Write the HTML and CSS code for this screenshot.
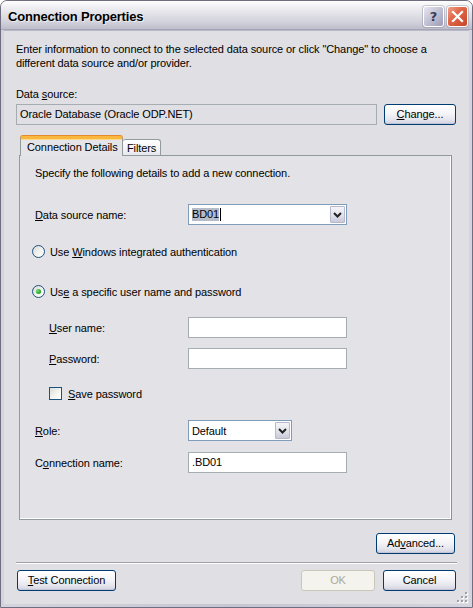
FILE: index.html
```html
<!DOCTYPE html>
<html>
<head>
<meta charset="utf-8">
<title>Connection Properties</title>
<link rel="stylesheet" href="styles.css">
</head>
<body>
<div class="window">
  <div class="titlebar">
    <span class="title">Connection Properties</span>
    <div class="caption-btn help"><span>?</span></div>
    <div class="caption-btn close">
      <svg width="13" height="13" viewBox="0 0 13 13"><path d="M2 2 L11 11 M11 2 L2 11" stroke="#fff" stroke-width="2.2" stroke-linecap="square"/></svg>
    </div>
  </div>
  <div class="client">
    <p class="intro">Enter information to connect to the selected data source or click "Change" to choose a different data source and/or provider.</p>
    <div class="label ds-label">Data <u>s</u>ource:</div>
    <div class="ds-row">
      <div class="field readonly">Oracle Database (Oracle ODP.NET)</div>
      <button class="btn change"><u>C</u>hange...</button>
    </div>
    <div class="tabs">
      <div class="tab selected">Connection Details</div>
      <div class="tab">Filters</div>
    </div>
    <div class="panel">
      <div class="hint">Specify the following details to add a new connection.</div>
      <div class="frow r-dsn">
        <span class="flabel"><u>D</u>ata source name:</span>
        <div class="combo wide"><span class="ctext"><span class="sel">BD01</span><span class="caret"></span></span><span class="cbtn"><svg width="9" height="6" viewBox="0 0 9 6"><path d="M1 1 L4.5 4.5 L8 1" fill="none" stroke="#222" stroke-width="2"/></svg></span></div>
      </div>
      <div class="rrow r-win"><span class="radio"></span><span>Use <u>W</u>indows integrated authentication</span></div>
      <div class="rrow r-spec"><span class="radio checked"></span><span>Us<u>e</u> a specific user name and password</span></div>
      <div class="frow indent r-user">
        <span class="flabel"><u>U</u>ser name:</span>
        <div class="field text"></div>
      </div>
      <div class="frow indent r-pass">
        <span class="flabel"><u>P</u>assword:</span>
        <div class="field text"></div>
      </div>
      <div class="rrow indent r-save"><span class="check"></span><span><u>S</u>ave password</span></div>
      <div class="frow r-role">
        <span class="flabel"><u>R</u>ole:</span>
        <div class="combo narrow"><span class="ctext">Default</span><span class="cbtn"><svg width="9" height="6" viewBox="0 0 9 6"><path d="M1 1 L4.5 4.5 L8 1" fill="none" stroke="#222" stroke-width="2"/></svg></span></div>
      </div>
      <div class="frow r-conn">
        <span class="flabel">C<u>o</u>nnection name:</span>
        <div class="field text">.BD01</div>
      </div>
    </div>
    <div class="adv-row"><button class="btn adv">Ad<u>v</u>anced...</button></div>
    <div class="sep"></div>
    <div class="bottom-row">
      <button class="btn test"><u>T</u>est Connection</button>
      <div class="spacer"></div>
      <button class="btn ok" disabled>OK</button>
      <button class="btn cancel">Cancel</button>
    </div>
    <svg class="grip" width="11" height="11" viewBox="0 0 11 11">
      <g fill="#fff"><rect x="9" y="1" width="2" height="2"/><rect x="5" y="5" width="2" height="2"/><rect x="9" y="5" width="2" height="2"/><rect x="1" y="9" width="2" height="2"/><rect x="5" y="9" width="2" height="2"/><rect x="9" y="9" width="2" height="2"/></g>
      <g fill="#a0a0a8"><rect x="8" y="0" width="2" height="2"/><rect x="4" y="4" width="2" height="2"/><rect x="8" y="4" width="2" height="2"/><rect x="0" y="8" width="2" height="2"/><rect x="4" y="8" width="2" height="2"/><rect x="8" y="8" width="2" height="2"/></g>
    </svg>
  </div>
</div>
</body>
</html>
```

FILE: styles.css
```css
* { box-sizing: border-box; }
html, body { margin: 0; padding: 0; }
body {
  background: #ffffff;
  font-family: "Liberation Sans", Arial, sans-serif;
  font-size: 11px;
  letter-spacing: -0.1px;
  color: #000;
}
u { text-decoration: underline; text-underline-offset: 1px; }

.window {
  width: 473px;
  height: 608px;
  display: flex;
  flex-direction: column;
  border: 1px solid #6e6e80;
  border-radius: 7px 7px 0 0;
  background: linear-gradient(90deg, #d4d4de, #c6c6d2 50%, #d4d4de);
  overflow: hidden;
}

.titlebar {
  height: 29px;
  flex: none;
  display: flex;
  align-items: center;
  gap: 3px;
  padding: 0 4px 0 7px;
  background: linear-gradient(#fefefe 0%, #f2f2f5 18%, #e2e2e8 45%, #d2d2dc 75%, #bdbdcb 100%);
  border-bottom: 1px solid #a4a4b4;
}
.title {
  flex: 1;
  font-weight: bold;
  font-size: 13px;
  letter-spacing: -0.2px;
  color: #000;
  text-shadow: 1px 1px 0 rgba(255,255,255,0.6);
  padding-top: 2px;
}
.caption-btn {
  width: 21px;
  height: 21px;
  border: 1px solid #ffffff;
  border-radius: 3px;
  display: flex;
  align-items: center;
  justify-content: center;
  box-shadow: 0 0 0 1px rgba(120,120,140,0.35);
  margin-top: 2px;
}
.help {
  background: linear-gradient(135deg, #e6e6f0 0%, #c4c4d8 45%, #9c9cb8 100%);
}
.help span {
  font-family: "DejaVu Sans", sans-serif;
  font-weight: bold;
  font-size: 13px;
  color: #3c3c52;
}
.close {
  background: linear-gradient(135deg, #f0a08c 0%, #e06848 40%, #c8452a 100%);
}

.client {
  flex: 1;
  margin: 0 3px 3px;
  background: #e0dfe3;
  padding: 11px 13px 0 12px;
  display: flex;
  flex-direction: column;
  position: relative;
  border-top: 1px solid #b8b8c8;
}

.intro {
  margin: 0;
  line-height: 14px;
}
.label { line-height: 14px; }
.ds-label { margin-top: 17px; }

.ds-row {
  margin-top: 3px;
  display: flex;
  gap: 7px;
  height: 21px;
}
.field {
  border: 1px solid #a5acb2;
  background: #fff;
  height: 21px;
  line-height: 19px;
  padding-left: 3px;
}
.field.readonly {
  flex: 0 0 361px;
  background: #e0dfe3;
}

.btn {
  font-family: "Liberation Sans", Arial, sans-serif;
  font-size: 11px;
  letter-spacing: -0.1px;
  color: #000;
  height: 21px;
  border: 1px solid #003c74;
  border-radius: 3px;
  background: linear-gradient(#ffffff 0%, #f6f6fa 40%, #e6e6ee 75%, #d2d2e0 100%);
  box-shadow: inset 0 -1px 0 #c4c4d4, inset 0 1px 0 #fff;
  padding: 0;
  line-height: 17px;
}
.change { width: 73px; }
.adv { width: 79px; }
.test { width: 99px; }
.ok {
  width: 74px;
  border-color: #c9c7ba;
  background: #f4f3ee;
  box-shadow: none;
  color: #aca899;
}
.cancel { width: 73px; margin-left: 8px; }

.tabs {
  margin-top: 11px;
  margin-left: 4px;
  display: flex;
  align-items: flex-end;
  height: 19px;
  position: relative;
  z-index: 1;
}
.tab {
  height: 16px;
  line-height: 15px;
  padding: 0 4px;
  border: 1px solid #919b9c;
  border-bottom: none;
  border-left: none;
  border-radius: 3px 3px 0 0;
  background: linear-gradient(#ffffff, #f3f3f7 60%, #e6e6ee);
}
.tab.selected {
  height: 20px;
  margin-bottom: -1px;
  width: 103px;
  padding: 0 0 0 6px;
  line-height: 17px;
  border-left: 1px solid #919b9c;
  border-top: 3px solid #f8b840;
  box-shadow: inset 0 1px 0 #ffd88a, 0 -1px 0 #e68b2c;
  background: #e5e4e8;
}
.tab:not(.selected) { width: 38px; padding-left: 4px; line-height: 16px; }

.panel {
  margin-left: 3px;
  margin-right: 4px;
  height: 365px;
  border: 1px solid #919b9c;
  border-right-color: #8a9090;
  box-shadow: inset -1px -1px 0 #ffffff;
  background: #e3e2e6;
  padding: 10px 0 0 15px;
  display: flex;
  flex-direction: column;
}
.hint { line-height: 14px; }

.frow {
  display: flex;
  align-items: center;
  height: 21px;
}
.flabel { width: 153px; flex: none; }
.frow.indent { padding-left: 14px; }
.frow.indent .flabel { width: 139px; }
.frow .field.text { width: 159px; }

.r-dsn { margin-top: 24px; }
.r-win { margin-top: 19px; }
.r-spec { margin-top: 25px; }
.r-user { margin-top: 18px; }
.r-pass { margin-top: 10px; }
.r-save { margin-top: 17px; }
.r-role { margin-top: 19px; }
.r-conn { margin-top: 11px; }

.rrow {
  display: flex;
  align-items: center;
  height: 15px;
  gap: 5px;
  margin-left: -3px;
}
.rrow.indent { margin-left: 14px; gap: 6px; }

.radio {
  width: 13px;
  height: 13px;
  border-radius: 50%;
  border: 1px solid #1c5180;
  background: linear-gradient(135deg, #d8d8d4, #f4f4f2 60%, #ffffff);
  display: flex;
  align-items: center;
  justify-content: center;
  flex: none;
}
.radio.checked::after {
  content: "";
  width: 5px;
  height: 5px;
  border-radius: 50%;
  background: radial-gradient(circle at 35% 35%, #6fe06c, #21a121 70%);
}
.check {
  width: 13px;
  height: 13px;
  border: 1px solid #1c5180;
  background: linear-gradient(135deg, #dcdcd7, #f6f6f4 60%, #ffffff);
  flex: none;
}

.combo {
  height: 21px;
  border: 1px solid #7f9db9;
  background: #fff;
  display: flex;
  align-items: center;
  padding: 1px;
}
.combo.wide { width: 159px; }
.combo.narrow { width: 104px; }
.ctext { flex: 1; padding-left: 2px; display: flex; align-items: center; }
.sel { background: #b4bccc; line-height: 13px; }
.caret { width: 1px; height: 13px; background: #000; margin-left: 1px; }
.cbtn {
  width: 15px;
  height: 17px;
  border: 1px solid #b8b8cc;
  border-radius: 1px;
  background: linear-gradient(#f4f4f8, #e0e0ea 60%, #c8c8d8);
  display: flex;
  align-items: center;
  justify-content: center;
}

.adv-row {
  margin-top: 13px;
  display: flex;
  justify-content: flex-end;
  padding-right: 1px;
}
.sep {
  margin-top: 8px;
  height: 2px;
  border-top: 1px solid #a0a0a4;
  border-bottom: 1px solid #ffffff;
  margin-right: -1px;
}
.bottom-row {
  margin-top: 6px;
  display: flex;
  padding-left: 1px;
}
.spacer { flex: 1; }

.grip {
  position: absolute;
  right: 1px;
  bottom: 1px;
}
```
